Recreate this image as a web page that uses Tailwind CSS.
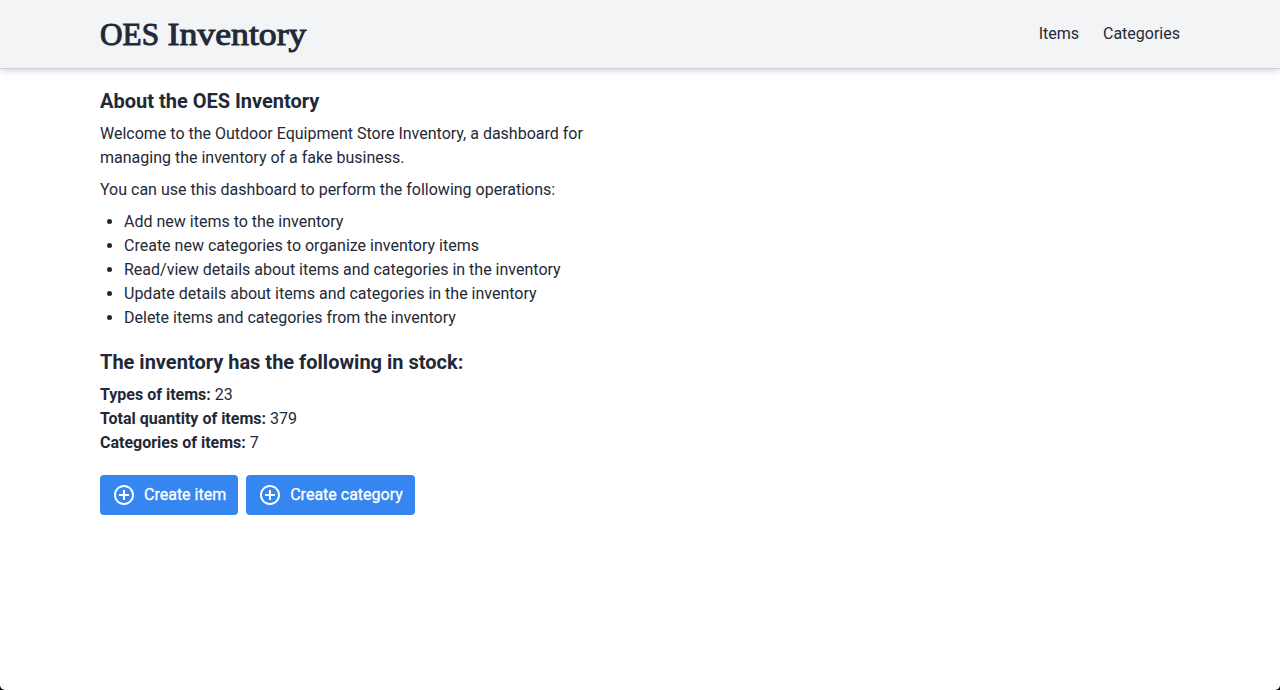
<!DOCTYPE html>
<html lang="en">
<head>
<meta charset="utf-8">
<title>OES Inventory</title>
<script src="https://cdn.jsdelivr.net/npm/@tailwindcss/browser@4"></script>
</head>
<body class="bg-black">
<div class="flex h-screen flex-col overflow-hidden rounded-b-[5px] bg-white font-[Roboto,sans-serif] text-base text-[#1f2937] antialiased">
  <header class="flex h-[69px] shrink-0 items-center justify-between border-b border-[#cdd0de] bg-[#f3f4f6] px-[100px] shadow-md">
    <h1><svg class="block h-[45px] w-[207px] overflow-visible fill-[#1f2937] stroke-[#1f2937] font-['Liberation_Serif',serif] text-[32px]" stroke-width="1" viewBox="0 0 207 45"><text y="33"><tspan x="0" textLength="59" lengthAdjust="spacingAndGlyphs">OES</tspan> <tspan x="67.500" textLength="139" lengthAdjust="spacingAndGlyphs">Inventory</tspan></text></svg></h1>
    <nav class="flex gap-6"><a>Items</a><a>Categories</a></nav>
  </header>
  <main class="px-[100px] pt-[18px]">
    <section class="w-[512px]">
      <h2 class="mb-2 pt-[2px] text-xl leading-[25px] font-bold">About the OES Inventory</h2>
      <p class="mb-2">Welcome to the Outdoor Equipment Store Inventory, a dashboard for managing the inventory of a fake business.</p>
      <p class="mb-2">You can use this dashboard to perform the following operations:</p>
      <ul class="list-disc pl-6">
        <li>Add new items to the inventory</li>
        <li>Create new categories to organize inventory items</li>
        <li>Read/view details about items and categories in the inventory</li>
        <li>Update details about items and categories in the inventory</li>
        <li>Delete items and categories from the inventory</li>
      </ul>
    </section>
    <section class="pt-5">
      <h2 class="mb-2 text-xl leading-[25px] font-bold">The inventory has the following in stock:</h2>
      <p><b>Types of items:</b> 23</p>
      <p><b>Total quantity of items:</b> 379</p>
      <p><b>Categories of items:</b> 7</p>
    </section>
    <div class="mt-5 flex gap-2 text-white [-webkit-text-stroke:0.3px_white]">
      <a class="flex h-10 items-center gap-2 rounded bg-[#3586f0] px-3"><svg class="size-6" viewBox="0 0 24 24" fill="currentColor"><path d="M13 7h-2v4H7v2h4v4h2v-4h4v-2h-4V7zm-1-5C6.480 2 2 6.480 2 12s4.480 10 10 10 10-4.480 10-10S17.520 2 12 2zm0 18c-4.410 0-8-3.590-8-8s3.590-8 8-8 8 3.590 8 8-3.590 8-8 8z"/></svg>Create item</a>
      <a class="flex h-10 items-center gap-2 rounded bg-[#3586f0] px-3"><svg class="size-6" viewBox="0 0 24 24" fill="currentColor"><path d="M13 7h-2v4H7v2h4v4h2v-4h4v-2h-4V7zm-1-5C6.480 2 2 6.480 2 12s4.480 10 10 10 10-4.480 10-10S17.520 2 12 2zm0 18c-4.410 0-8-3.590-8-8s3.590-8 8-8 8 3.590 8 8-3.590 8-8 8z"/></svg>Create category</a>
    </div>
  </main>
</div>
</body>
</html>
